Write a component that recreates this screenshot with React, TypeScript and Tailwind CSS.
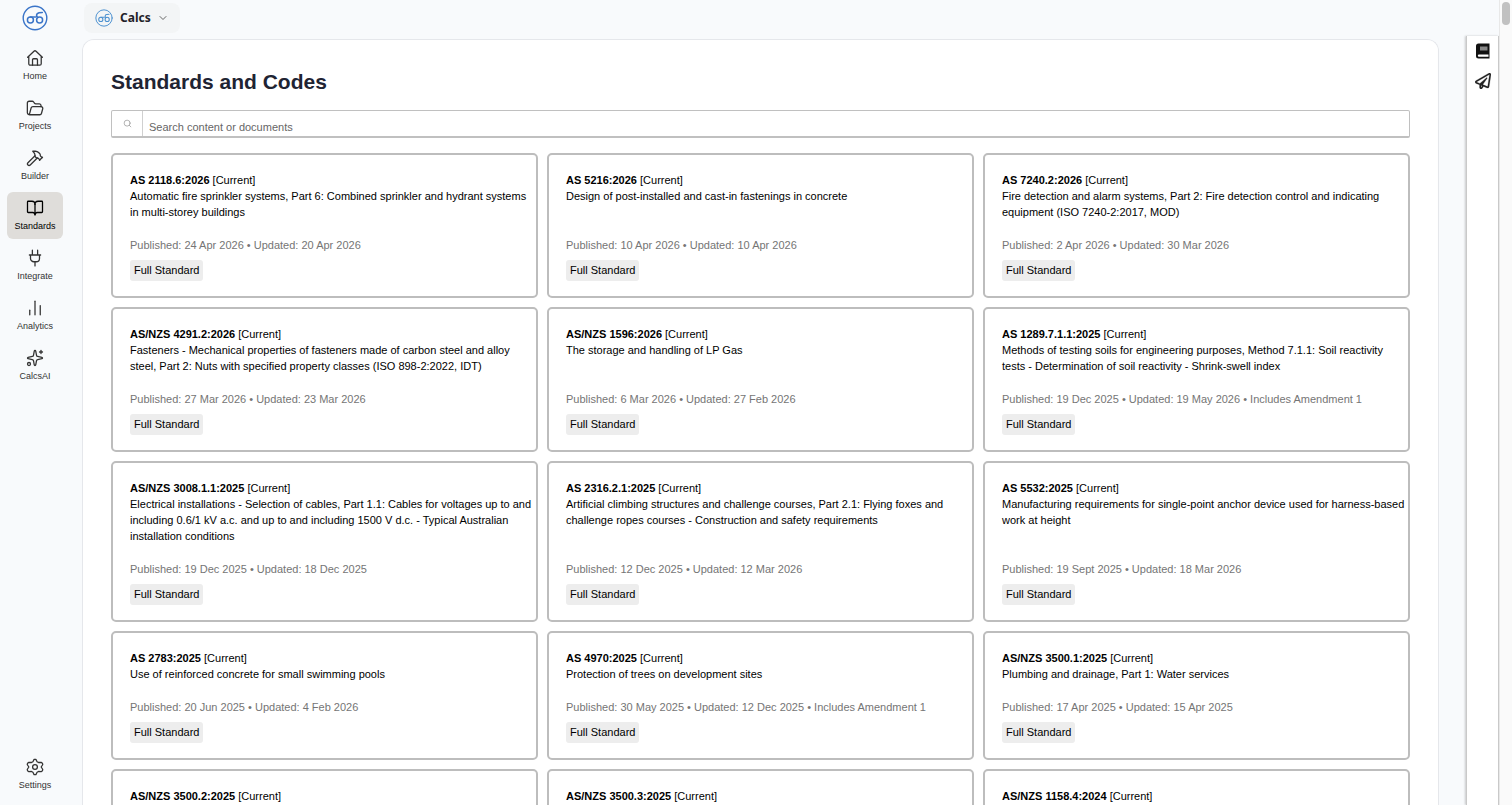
import React, { useState } from 'react';
import { ChartNoAxesColumn, ChevronDown, BookOpen, Hammer, Search, Sparkles } from 'lucide-react';
import { FaRegPaperPlane } from 'react-icons/fa';

interface Standard {
  code: string;
  title: string;
  published: string;
  updated: string;
  amendment?: string;
}

const STANDARDS: Standard[] = [
  { code: 'AS 2118.6:2026', title: 'Automatic fire sprinkler systems, Part 6: Combined sprinkler and hydrant systems in multi-storey buildings', published: '24 Apr 2026', updated: '20 Apr 2026' },
  { code: 'AS 5216:2026', title: 'Design of post-installed and cast-in fastenings in concrete', published: '10 Apr 2026', updated: '10 Apr 2026' },
  { code: 'AS 7240.2:2026', title: 'Fire detection and alarm systems, Part 2: Fire detection control and indicating equipment (ISO 7240-2:2017, MOD)', published: '2 Apr 2026', updated: '30 Mar 2026' },
  { code: 'AS/NZS 4291.2:2026', title: 'Fasteners - Mechanical properties of fasteners made of carbon steel and alloy steel, Part 2: Nuts with specified property classes (ISO 898-2:2022, IDT)', published: '27 Mar 2026', updated: '23 Mar 2026' },
  { code: 'AS/NZS 1596:2026', title: 'The storage and handling of LP Gas', published: '6 Mar 2026', updated: '27 Feb 2026' },
  { code: 'AS 1289.7.1.1:2025', title: 'Methods of testing soils for engineering purposes, Method 7.1.1: Soil reactivity tests - Determination of soil reactivity - Shrink-swell index', published: '19 Dec 2025', updated: '19 May 2026', amendment: 'Includes Amendment 1' },
  { code: 'AS/NZS 3008.1.1:2025', title: 'Electrical installations - Selection of cables, Part 1.1: Cables for voltages up to and including 0.6/1 kV a.c. and up to and including 1500 V d.c. - Typical Australian installation conditions', published: '19 Dec 2025', updated: '18 Dec 2025' },
  { code: 'AS 2316.2.1:2025', title: 'Artificial climbing structures and challenge courses, Part 2.1: Flying foxes and challenge ropes courses - Construction and safety requirements', published: '12 Dec 2025', updated: '12 Mar 2026' },
  { code: 'AS 5532:2025', title: 'Manufacturing requirements for single-point anchor device used for harness-based work at height', published: '19 Sept 2025', updated: '18 Mar 2026' },
  { code: 'AS 2783:2025', title: 'Use of reinforced concrete for small swimming pools', published: '20 Jun 2025', updated: '4 Feb 2026' },
  { code: 'AS 4970:2025', title: 'Protection of trees on development sites', published: '30 May 2025', updated: '12 Dec 2025', amendment: 'Includes Amendment 1' },
  { code: 'AS/NZS 3500.1:2025', title: 'Plumbing and drainage, Part 1: Water services', published: '17 Apr 2025', updated: '15 Apr 2025' },
  { code: 'AS/NZS 3500.2:2025', title: 'Plumbing and drainage, Part 2: Sanitary plumbing and drainage', published: '17 Apr 2025', updated: '15 Apr 2025' },
  { code: 'AS/NZS 3500.3:2025', title: 'Plumbing and drainage, Part 3: Stormwater drainage', published: '17 Apr 2025', updated: '15 Apr 2025' },
  { code: 'AS/NZS 1158.4:2024', title: 'Lighting for roads and public spaces, Part 4: Lighting of pedestrian crossings', published: '20 Dec 2024', updated: '20 Dec 2024' },
];

function Logo({ className }: { className: string }) {
  return (
    <svg viewBox="0 0 26 26" fill="none" stroke="currentColor" strokeLinecap="round" className={className} aria-hidden="true">
      <circle cx="13" cy="13" r="11.8" strokeWidth="1.4" />
      <circle cx="8.4" cy="15" r="3" strokeWidth="1.5" />
      <circle cx="17.6" cy="15" r="3" strokeWidth="1.5" />
      <path d="M8.4 12h5.2M15.6 12.6c-1-1.2-1.3-2.9-.3-4 .9-.9 2.5-1 5-1" strokeWidth="1.5" />
    </svg>
  );
}

function HomeIcon({ className }: { className?: string }) {
  return (
    <svg viewBox="0 0 24 24" fill="none" stroke="currentColor" strokeLinecap="round" strokeLinejoin="round" className={className}>
      <path d="M2.2 11 10.6 3a2 2 0 0 1 2.8 0l8.4 8M3.7 9.8v9.7a2 2 0 0 0 2 2h12.6a2 2 0 0 0 2-2V9.8" />
      <path d="M8.7 21.5v-7.2a1.3 1.3 0 0 1 1.3-1.3h4a1.3 1.3 0 0 1 1.3 1.3v7.2" />
    </svg>
  );
}

function FolderIcon({ className }: { className?: string }) {
  return (
    <svg viewBox="0 0 24 24" fill="none" stroke="currentColor" strokeLinecap="round" strokeLinejoin="round" className={className}>
      <path d="M3.4 20.6A2.3 2.3 0 0 1 1.8 18.4V5.3A2.3 2.3 0 0 1 4.1 3h4.2c.8 0 1.5.4 1.9 1l1 1.5c.4.6 1.1 1 1.9 1h4.6A2.3 2.3 0 0 1 20 8.8v1.4" />
      <path d="M3.4 20.6c.4.3.9.4 1.4.4h13.6c1 0 1.9-.7 2.2-1.7l1.7-6.3a2.2 2.2 0 0 0-2.1-2.9H9.1c-1 0-1.9.7-2.2 1.6l-2 7.5c-.2.7-.8 1.3-1.5 1.4Z" />
    </svg>
  );
}

function PlugIcon({ className }: { className?: string }) {
  return (
    <svg viewBox="0 0 24 24" fill="none" stroke="currentColor" strokeLinecap="round" strokeLinejoin="round" className={className}>
      <path d="M12 22.5V17M8.5 8V1.5M15.5 8V1.5M4.5 8h15M18 8v4.5a4.5 4.5 0 0 1-4.5 4.5h-3A4.5 4.5 0 0 1 6 12.5V8" />
    </svg>
  );
}

function GearIcon({ className }: { className?: string }) {
  return (
    <svg viewBox="0 0 24 24" fill="none" stroke="currentColor" strokeLinejoin="round" className={className}>
      <path d="M10.8 1.8h2.4l1.6 3.2 1.8 1 3.6-.2 1.1.6 1 1.8-.1.8L20.2 12l2 3 .1.8-1 1.8-1.1.6-3.6-.2-1.8 1-1.6 3.2h-2.4L9.2 19l-1.8-1-3.6.2-1.1-.6-1-1.8.1-.8 2-3-2-3-.1-.8 1-1.8 1.1-.6 3.6.2 1.8-1Z" />
      <circle cx="12" cy="12" r="3.2" />
    </svg>
  );
}

const NAV = [
  { label: 'Home', icon: HomeIcon },
  { label: 'Projects', icon: FolderIcon },
  { label: 'Builder', icon: Hammer },
  { label: 'Standards', icon: BookOpen },
  { label: 'Integrate', icon: PlugIcon },
  { label: 'Analytics', icon: ChartNoAxesColumn },
  { label: 'CalcsAI', icon: Sparkles },
];

function NavItem({ label, icon: Icon, active }: { label: string; icon: React.ElementType; active?: boolean }) {
  return (
    <a
      href="#"
      aria-current={active ? 'page' : undefined}
      className={`flex h-[47px] w-14 flex-col items-center gap-[3px] rounded-md pt-[7px] text-[9px] leading-3 ${active ? 'bg-[#dfddda] text-black' : 'text-[#333]'}`}
    >
      <Icon className="size-[18px] [stroke-width:1.7]" />
      {label}
    </a>
  );
}

function StandardCard({ item }: { item: Standard }) {
  return (
    <article className="flex flex-col rounded-[5px] border-2 border-[#bdbdbd] pt-[17px] pr-0.5 pb-[15px] pl-[17px] text-[11px] leading-4 text-black">
      <h2><b>{item.code}</b> [Current]</h2>
      <p className="mb-[17px]">{item.title}</p>
      <p className="mt-auto text-[#757575]">
        Published: {item.published} • Updated: {item.updated}
        {item.amendment && ` • ${item.amendment}`}
      </p>
      <span className="mt-[7px] self-start rounded-[3px] bg-[#ededed] px-1 py-[3px] leading-[15px]">Full Standard</span>
    </article>
  );
}

export default function App() {
  const [query, setQuery] = useState('');
  const items = STANDARDS.filter(s => `${s.code} ${s.title}`.toLowerCase().includes(query.toLowerCase()));

  return (
    <div className="flex h-screen overflow-hidden bg-[#f8fafc] font-['Liberation_Sans',Arial,sans-serif]">
      {/* Left navigation */}
      <nav className="flex w-[82px] shrink-0 flex-col pb-[7px] pl-[7px]">
        <a href="#" aria-label="Calcs" className="flex h-[42px] w-14 justify-center pt-[5px]">
          <Logo className="size-[26px] text-[#3a74c8]" />
        </a>
        <div className="flex flex-col gap-[3px]">
          {NAV.map(n => <NavItem key={n.label} label={n.label} icon={n.icon} active={n.label === 'Standards'} />)}
        </div>
        <div className="mt-auto">
          <NavItem label="Settings" icon={GearIcon} />
        </div>
      </nav>

      <div className="flex min-w-0 grow flex-col">
        <header className="flex h-[39px] shrink-0 items-start pt-[3px] pl-0.5">
          <button className="flex h-[30px] items-center rounded-lg bg-[#f3f5f6] px-[11px] text-xs font-bold text-[#1f2228]">
            <Logo className="size-[18px] text-[#4a90d0]" />
            <span className="ml-[7px] font-['Noto_Sans',sans-serif]">Calcs</span>
            <ChevronDown className="ml-1.5 size-3 text-[#666]" strokeWidth={2} />
          </button>
        </header>

        {/* Content panel */}
        <main className="min-h-0 grow overflow-y-auto rounded-t-xl border border-b-0 border-[#e5e7eb] bg-white px-7 py-7 [scrollbar-width:none]">
          <h1 className="text-[21px] leading-7 font-bold text-[#1f2433]">Standards and Codes</h1>
          <div className="mt-[14px] flex h-7 rounded-[2px] border border-b-2 border-[#c0c0c0]">
            <label htmlFor="search" aria-label="Search" className="flex w-[31px] items-center justify-center border-r border-[#d0d0d0]">
              <Search className="size-[9px] text-[#999]" />
            </label>
            <input
              id="search"
              type="text"
              aria-label="Search content or documents"
              value={query}
              onChange={e => setQuery(e.target.value)}
              placeholder="Search content or documents"
              className="min-w-0 grow px-1.5 pt-1.5 text-[11px] leading-4 text-black outline-none placeholder:text-[#666]"
            />
          </div>
          <div className="mt-[15px] grid grid-cols-3 gap-[9px]">
            {items.map(s => <StandardCard key={s.code} item={s} />)}
          </div>
        </main>
      </div>

      {/* Right tool rail */}
      <aside className="mt-9 ml-[27px] flex w-[33px] shrink-0 flex-col items-center gap-3.5 border-x border-[#c9c9c9] bg-white pt-[7px] shadow-[-1px_0_2px_rgba(0,0,0,0.2)]">
        <button aria-label="Library">
          <svg viewBox="0 0 16 16" className="size-4">
            <path d="M3.5.5h11v15h-11a2.5 2.5 0 0 1-2.5-2.5V3A2.5 2.5 0 0 1 3.5.5Z" fill="#111" />
            <path d="M5 3.5h7.5v4H5z" fill="#888" />
            <path d="M4 11.5h9.5v2.3H4a1.15 1.15 0 0 1 0-2.3Z" fill="#fff" />
          </svg>
        </button>
        <button aria-label="Send feedback">
          <FaRegPaperPlane className="size-4 stroke-[#222] stroke-[6px] text-[#222]" />
        </button>
      </aside>

      {/* Scroll track */}
      <div className="flex w-[13px] shrink-0 justify-center border-l border-[#e8e8e8] bg-[#fafafa] pt-0.5">
        <div className="h-[23px] w-2 rounded-full bg-[#c1c1c1]" />
      </div>
    </div>
  );
}
